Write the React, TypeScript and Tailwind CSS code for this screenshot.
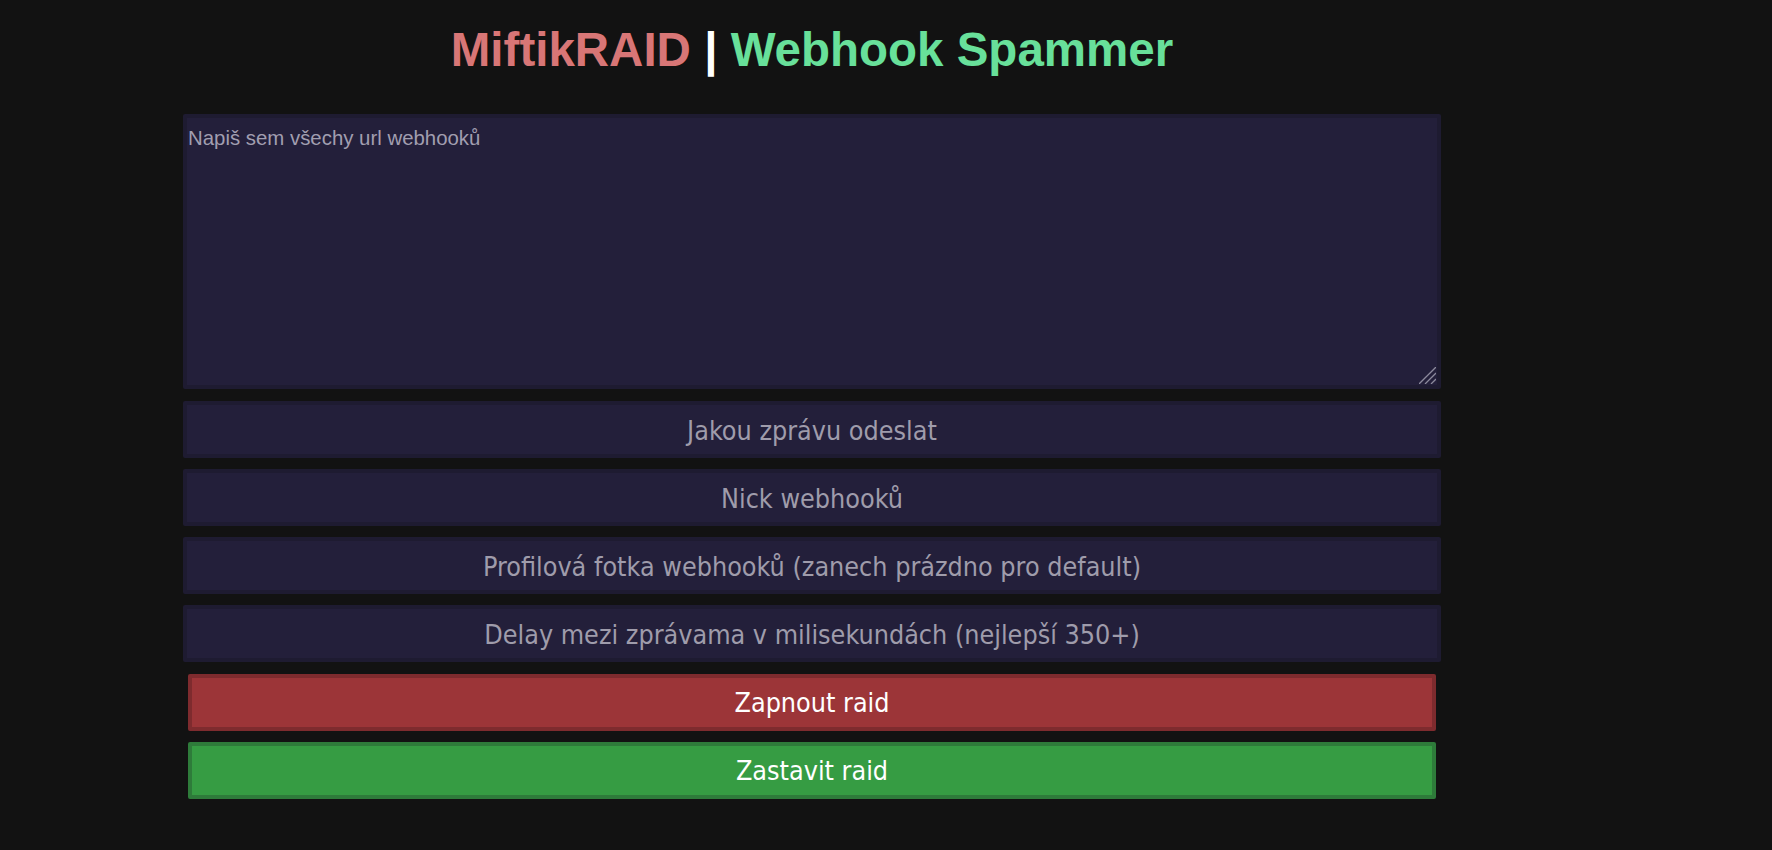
import React from "react";

const fieldClass =
  "h-[57px] w-full rounded-[2px] border-4 border-[#1e1b31] bg-[#231f3a] pt-[1px] text-center text-[26.7px] text-[#9f9cab] outline-none placeholder:text-[#9f9cab] font-['DejaVu_Sans_Condensed','DejaVu_Sans',sans-serif]";

const buttonClass =
  "mx-[5px] h-[57px] rounded-[2px] border-4 pt-[1px] text-center text-[26.7px] text-white font-['DejaVu_Sans_Condensed','DejaVu_Sans',sans-serif]";

export default function App() {
  const fields = [
    "Jakou zprávu odeslat",
    "Nick webhooků",
    "Profilová fotka webhooků (zanech prázdno pro default)",
    "Delay mezi zprávama v milisekundách (nejlepší 350+)",
  ];

  return (
    <div className="min-h-screen bg-[#121212] font-['Liberation_Sans',Arial,sans-serif]">
      <div className="flex w-[1624px] flex-col items-center">
        <h1 className="pt-[23px] text-[47.5px] font-bold leading-[54px]">
          <span className="text-[#d87676]">MiftikRAID</span>{" "}
          <span className="text-white">|</span>{" "}
          <span className="text-[#68e09a]">Webhook Spammer</span>
        </h1>

        <div className="mt-[37px] flex w-[1258px] flex-col">
          <div className="relative">
            <textarea
              placeholder="Napiš sem všechy url webhooků"
              className="block h-[275px] w-full resize-none rounded-[2px] border-4 border-[#1e1b31] bg-[#231f3a] px-[1px] pt-[5px] text-[20.4px] text-[#a19eb0] outline-none placeholder:text-[#a19eb0]"
            />
            {/* resize grip */}
            <svg
              className="pointer-events-none absolute bottom-[5px] right-[5px] h-[17px] w-[17px]"
              viewBox="0 0 17 17"
            >
              <g stroke="#8c8a9c" strokeWidth="1.3">
                <line x1="17" y1="0" x2="0" y2="17" />
                <line x1="17" y1="6" x2="6" y2="17" />
                <line x1="17" y1="12" x2="12" y2="17" />
              </g>
            </svg>
          </div>

          {fields.map((text, i) => (
            <input
              key={text}
              type="text"
              placeholder={text}
              className={`${fieldClass} ${i === 0 ? "mt-[12px]" : "mt-[11px]"}`}
            />
          ))}

          <button
            type="button"
            className={`${buttonClass} mt-[12px] border-[#7e2b2e] bg-[#9c3538]`}
          >
            Zapnout raid
          </button>
          <button
            type="button"
            className={`${buttonClass} mt-[11px] border-[#2e7b3a] bg-[#369c43]`}
          >
            Zastavit raid
          </button>
        </div>
      </div>
    </div>
  );
}
